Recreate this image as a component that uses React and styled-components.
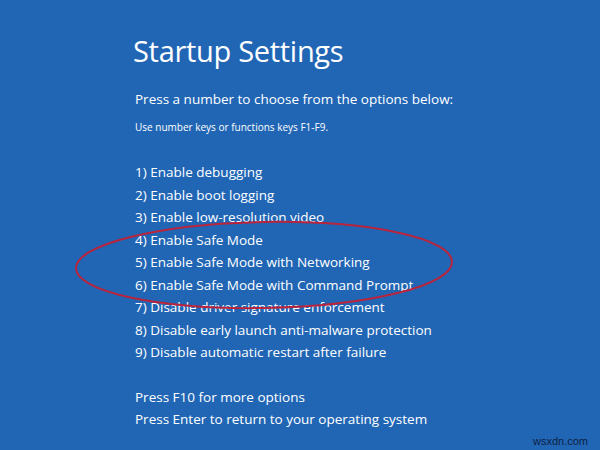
import styled, { createGlobalStyle } from "styled-components";

const GlobalStyle = createGlobalStyle`
  html, body {
    margin: 0;
    padding: 0;
    background: #2166b5;
  }
`;

const Screen = styled.div`
  position: relative;
  width: 600px;
  height: 450px;
  overflow: hidden;
  background: #2166b5;
  color: #fff;
  font-family: "Open Sans", "Noto Sans", sans-serif;
  box-sizing: border-box;
  padding: 31px 0 0 133px;
`;

const Title = styled.h1`
  margin: 0;
  font-size: 29px;
  font-weight: 400;
  line-height: 40px;
  letter-spacing: -0.3px;
`;

const Lead = styled.p`
  margin: 18px 0 0 2px;
  font-size: 13.5px;
  line-height: 20px;
`;

const Hint = styled.p`
  margin: 10px 0 0 2px;
  font-size: 10px;
  line-height: 16px;
`;

const OptionList = styled.ol`
  list-style: none;
  margin: 26px 0 0 2px;
  padding: 0;
`;

const Option = styled.li`
  font-size: 13.5px;
  line-height: 22.5px;
`;

const Footer = styled.div`
  margin: 22px 0 0 2px;
`;

const FooterLine = styled.p`
  margin: 0;
  font-size: 13.5px;
  line-height: 22.5px;
`;

// hand-drawn red ring laid over the safe mode entries
const Circle = styled.svg`
  position: absolute;
  left: 0;
  top: 0;
  pointer-events: none;
`;

const Watermark = styled.span`
  position: absolute;
  right: 12px;
  bottom: 3px;
  font-family: "Liberation Sans", Arial, sans-serif;
  font-size: 11px;
  color: #0d1f45;
`;

const options = [
  "Enable debugging",
  "Enable boot logging",
  "Enable low-resolution video",
  "Enable Safe Mode",
  "Enable Safe Mode with Networking",
  "Enable Safe Mode with Command Prompt",
  "Disable driver signature enforcement",
  "Disable early launch anti-malware protection",
  "Disable automatic restart after failure",
];

export default function App() {
  return (
    <>
      <GlobalStyle />
      <Screen>
        <Title>Startup Settings</Title>
        <Lead>Press a number to choose from the options below:</Lead>
        <Hint>Use number keys or functions keys F1-F9.</Hint>
        <OptionList>
          {options.map((o, i) => (
            <Option key={i}>
              {i + 1}) {o}
            </Option>
          ))}
        </OptionList>
        <Footer>
          <FooterLine>Press F10 for more options</FooterLine>
          <FooterLine>Press Enter to return to your operating system</FooterLine>
        </Footer>
        <Circle width="600" height="450" viewBox="0 0 600 450">
          <ellipse
            cx="264"
            cy="265"
            rx="188"
            ry="43"
            transform="rotate(-1 264 265)"
            fill="none"
            stroke="#b9243d"
            strokeWidth="2"
          />
        </Circle>
        <Watermark>wsxdn.com</Watermark>
      </Screen>
    </>
  );
}
